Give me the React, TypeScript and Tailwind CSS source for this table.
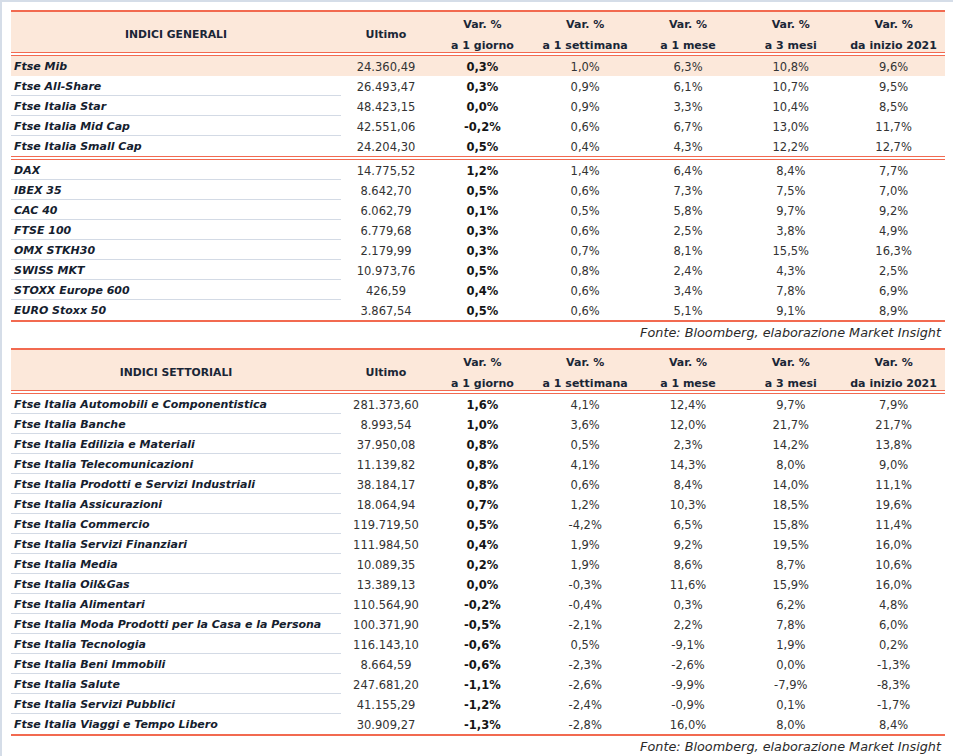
import React from 'react'

type Row = { name: string; vals: string[]; hl?: boolean }

const generali: Row[] = [
  { name: 'Ftse Mib', vals: ['24.360,49', '0,3%', '1,0%', '6,3%', '10,8%', '9,6%'], hl: true },
  { name: 'Ftse All-Share', vals: ['26.493,47', '0,3%', '0,9%', '6,1%', '10,7%', '9,5%'] },
  { name: 'Ftse Italia Star', vals: ['48.423,15', '0,0%', '0,9%', '3,3%', '10,4%', '8,5%'] },
  { name: 'Ftse Italia Mid Cap', vals: ['42.551,06', '-0,2%', '0,6%', '6,7%', '13,0%', '11,7%'] },
  { name: 'Ftse Italia Small Cap', vals: ['24.204,30', '0,5%', '0,4%', '4,3%', '12,2%', '12,7%'] },
]

const esteri: Row[] = [
  { name: 'DAX', vals: ['14.775,52', '1,2%', '1,4%', '6,4%', '8,4%', '7,7%'] },
  { name: 'IBEX 35', vals: ['8.642,70', '0,5%', '0,6%', '7,3%', '7,5%', '7,0%'] },
  { name: 'CAC 40', vals: ['6.062,79', '0,1%', '0,5%', '5,8%', '9,7%', '9,2%'] },
  { name: 'FTSE 100', vals: ['6.779,68', '0,3%', '0,6%', '2,5%', '3,8%', '4,9%'] },
  { name: 'OMX STKH30', vals: ['2.179,99', '0,3%', '0,7%', '8,1%', '15,5%', '16,3%'] },
  { name: 'SWISS MKT', vals: ['10.973,76', '0,5%', '0,8%', '2,4%', '4,3%', '2,5%'] },
  { name: 'STOXX Europe 600', vals: ['426,59', '0,4%', '0,6%', '3,4%', '7,8%', '6,9%'] },
  { name: 'EURO Stoxx 50', vals: ['3.867,54', '0,5%', '0,6%', '5,1%', '9,1%', '8,9%'] },
]

const settoriali: Row[] = [
  { name: 'Ftse Italia Automobili e Componentistica', vals: ['281.373,60', '1,6%', '4,1%', '12,4%', '9,7%', '7,9%'] },
  { name: 'Ftse Italia Banche', vals: ['8.993,54', '1,0%', '3,6%', '12,0%', '21,7%', '21,7%'] },
  { name: 'Ftse Italia Edilizia e Materiali', vals: ['37.950,08', '0,8%', '0,5%', '2,3%', '14,2%', '13,8%'] },
  { name: 'Ftse Italia Telecomunicazioni', vals: ['11.139,82', '0,8%', '4,1%', '14,3%', '8,0%', '9,0%'] },
  { name: 'Ftse Italia Prodotti e Servizi Industriali', vals: ['38.184,17', '0,8%', '0,6%', '8,4%', '14,0%', '11,1%'] },
  { name: 'Ftse Italia Assicurazioni', vals: ['18.064,94', '0,7%', '1,2%', '10,3%', '18,5%', '19,6%'] },
  { name: 'Ftse Italia Commercio', vals: ['119.719,50', '0,5%', '-4,2%', '6,5%', '15,8%', '11,4%'] },
  { name: 'Ftse Italia Servizi Finanziari', vals: ['111.984,50', '0,4%', '1,9%', '9,2%', '19,5%', '16,0%'] },
  { name: 'Ftse Italia Media', vals: ['10.089,35', '0,2%', '1,9%', '8,6%', '8,7%', '10,6%'] },
  { name: 'Ftse Italia Oil&Gas', vals: ['13.389,13', '0,0%', '-0,3%', '11,6%', '15,9%', '16,0%'] },
  { name: 'Ftse Italia Alimentari', vals: ['110.564,90', '-0,2%', '-0,4%', '0,3%', '6,2%', '4,8%'] },
  { name: 'Ftse Italia Moda Prodotti per la Casa e la Persona', vals: ['100.371,90', '-0,5%', '-2,1%', '2,2%', '7,8%', '6,0%'] },
  { name: 'Ftse Italia Tecnologia', vals: ['116.143,10', '-0,6%', '0,5%', '-9,1%', '1,9%', '0,2%'] },
  { name: 'Ftse Italia Beni Immobili', vals: ['8.664,59', '-0,6%', '-2,3%', '-2,6%', '0,0%', '-1,3%'] },
  { name: 'Ftse Italia Salute', vals: ['247.681,20', '-1,1%', '-2,6%', '-9,9%', '-7,9%', '-8,3%'] },
  { name: 'Ftse Italia Servizi Pubblici', vals: ['41.155,29', '-1,2%', '-2,4%', '-0,9%', '0,1%', '-1,7%'] },
  { name: 'Ftse Italia Viaggi e Tempo Libero', vals: ['30.909,27', '-1,3%', '-2,8%', '16,0%', '8,0%', '8,4%'] },
]

const grid = 'grid grid-cols-[330px_90px_repeat(5,minmax(0,1fr))]'

function RedLine() {
  return <div className="h-[2px] bg-[#f26a50]" />
}

function DoubleLine() {
  return <div className="h-[4px] border-y border-[#f26a50] bg-white" />
}

function Header({ title }: { title: string }) {
  const cols = ['a 1 giorno', 'a 1 settimana', 'a 1 mese', 'a 3 mesi', 'da inizio 2021']
  return (
    <div className={`${grid} h-[40px] bg-[#fce8da] text-[11px] font-bold text-[#1a2636]`}>
      <div className="flex items-center justify-center pt-[2px] text-[10.8px]">{title}</div>
      <div className="flex items-center justify-center pt-[2px]">Ultimo</div>
      {cols.map((c) => (
        <div key={c} className="flex flex-col items-center pt-[2px] leading-[21px]">
          <span>Var. %</span>
          <span>{c}</span>
        </div>
      ))}
    </div>
  )
}

function Rows({ rows }: { rows: Row[] }) {
  return (
    <div>
      {rows.map((r, i) => (
        <div key={r.name} className={`${grid} h-[20px] ${r.hl ? 'bg-[#fce8da]' : ''}`}>
          <div
            className={`pl-[3px] pt-[2px] text-[11px] font-bold italic leading-[17px] text-[#14202e] ${
              i < rows.length - 1 && !r.hl ? 'border-b border-[#d3dae5]' : ''
            }`}
          >
            {r.name}
          </div>
          {r.vals.map((v, j) => (
            <div
              key={j}
              className={`pt-[2px] text-center leading-[18px] ${
                j === 1 ? 'text-[11.5px] font-bold text-[#151515]' : 'text-[11.5px] text-[#333333]'
              }`}
            >
              {v}
            </div>
          ))}
        </div>
      ))}
    </div>
  )
}

function Fonte() {
  return (
    <div className="h-[20px] pr-[4px] pt-[2px] text-right text-[12.8px] italic leading-[18px] text-[#2a2a2a]">
      Fonte: Bloomberg, elaborazione Market Insight
    </div>
  )
}

export default function App() {
  return (
    <div className="h-[756px] w-[953px] overflow-hidden border-l-2 border-t-2 border-[#d5dde8] bg-white pl-[9px] pt-[8px] font-['DejaVu_Sans',sans-serif]">
      <div className="w-[934px]">
        {/* indici generali */}
        <RedLine />
        <Header title="INDICI GENERALI" />
        <DoubleLine />
        <Rows rows={generali} />
        <DoubleLine />
        <Rows rows={esteri} />
        <RedLine />
        <Fonte />
        <div className="h-[6px]" />

        {/* indici settoriali */}
        <RedLine />
        <Header title="INDICI SETTORIALI" />
        <DoubleLine />
        <Rows rows={settoriali} />
        <RedLine />
        <Fonte />
      </div>
    </div>
  )
}
